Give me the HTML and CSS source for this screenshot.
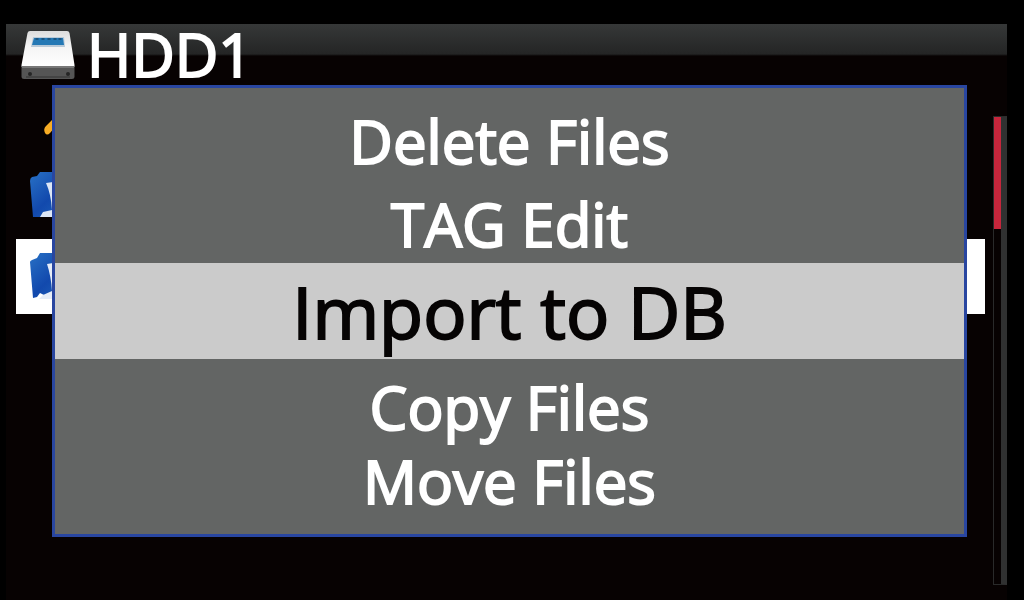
FILE: index.html
```html
<!DOCTYPE html>
<html lang="en">
<head>
    <meta charset="UTF-8">
    <meta name="viewport" content="width=device-width, initial-scale=1.0">
    <title>HDD1</title>
    <link rel="stylesheet" href="styles.css">
</head>
<body>

<div class="screen">
    <header class="title-bar">
        <svg class="drive-icon" viewBox="0 0 54 50" aria-hidden="true">
            <defs>
                <linearGradient id="driveTop" x1="0" y1="0" x2="0" y2="1">
                    <stop offset="0" stop-color="#dcdcdc"/>
                    <stop offset="0.4" stop-color="#f4f4f4"/>
                    <stop offset="1" stop-color="#ffffff"/>
                </linearGradient>
            </defs>
            <path d="M9 2H46Q48 2 48.500 4L53.500 36V38H0.500V36L6.500 4Q7 2 9 2Z" fill="url(#driveTop)"/>
            <path d="M12 8H43L44 18H10Z" fill="#b9cad8"/>
            <path d="M13 9H42L43 16H11Z" fill="#2579b5"/>
            <path d="M16 9V11M22 9V11M28 9V11M34 9V11M39 9V11" stroke="#1b5580" stroke-width="3"/>
            <path d="M0.500 37H53.500V48Q53.500 50 51 50H3Q0.500 50 0.500 48Z" fill="#555555"/>
            <path d="M1 38H53" stroke="#777777" stroke-width="2"/>
            <path d="M5 48H49" stroke="#444444" stroke-width="2"/>
            <circle cx="9" cy="45" r="2" fill="#252525"/>
            <circle cx="47" cy="45" r="2" fill="#252525"/>
        </svg>
        <h1>HDD1</h1>
    </header>

    <main class="browser">
        <!-- File list behind the menu -->
        <ul class="file-list">
            <li class="file-row">
                <svg class="file-icon" viewBox="0 0 48 48" aria-hidden="true">
                    <path d="M15 42Q13 38 16 35L22 29Q27 23 30 29L40 39L35 44L26 35L20 42Q17 45 15 42Z" fill="#f7ac24"/>
                </svg>
            </li>
            <li class="file-row">
                <svg class="file-icon" viewBox="0 0 48 48" aria-hidden="true">
                    <defs>
                        <linearGradient id="folder" x1="0" y1="0" x2="1" y2="1">
                            <stop offset="0" stop-color="#2871c5"/>
                            <stop offset="0.5" stop-color="#1249ad"/>
                            <stop offset="1" stop-color="#2268bd"/>
                        </linearGradient>
                    </defs>
                    <path d="M2 5L7 4L10 0H44Q47 0 47 4V45H3L0 9Q0 6 2 5Z" fill="url(#folder)"/>
                    <path d="M16 11L23 10L30 36V45H10L13 40L22 38Q21 22 16 11Z" fill="#dce6f5"/>
                </svg>
            </li>
            <li class="file-row selected">
                <svg class="file-icon" viewBox="0 0 48 48" aria-hidden="true">
                    <path d="M2 7L7 5L10 0H44Q47 0 47 3V42H14L10 40L7 44L3 45L0 9Q0 8 2 7Z" fill="url(#folder)"/>
                    <path d="M17 11L23 10L30 34V46H9L13 42L22 38Q21 23 17 11Z" fill="#e6edf8"/>
                </svg>
            </li>
        </ul>
        <div class="scroll-track">
            <div class="scroll-thumb"></div>
        </div>
    </main>

    <!-- Popup menu -->
    <div class="menu" role="menu">
        <button type="button" role="menuitem">Delete Files</button>
        <button type="button" role="menuitem">TAG Edit</button>
        <button type="button" role="menuitem" class="active">Import to DB</button>
        <button type="button" role="menuitem">Copy Files</button>
        <button type="button" role="menuitem">Move Files</button>
    </div>
</div>

</body>
</html>
```

FILE: styles.css
```css
* {
    box-sizing: border-box;
}
body {
    margin: 0;
    padding: 24px 17px 0 6px;
    min-height: 100vh;
    display: flex;
    background-color: #000;
    color: white;
    font-family: "Open Sans", "Noto Sans", sans-serif;
    /* a little heavier than regular */
    -webkit-text-stroke: 2px;
}
.screen {
    position: relative;
    flex: 1;
    display: flex;
    flex-direction: column;
    background-color: #070202;
}

.title-bar {
    display: flex;
    align-items: center;
    gap: 12px;
    height: 53px;
    padding: 6px 15px 0;
    background: linear-gradient(#363838 0, #242525 30px, #070202 32px);
}
.title-bar h1 {
    margin: 0;
    font-size: 60px;
    font-weight: 400;
    line-height: 60px;
}
.drive-icon {
    width: 54px;
    height: 50px;
    flex-shrink: 0;
}

.browser {
    flex: 1;
    display: flex;
    gap: 8px;
    padding: 0 0 15px 10px;
}
.file-list {
    flex: 1;
    display: flex;
    flex-direction: column;
    gap: 6px;
    margin: 0;
    padding: 0;
    list-style: none;
}
.file-row {
    display: flex;
    align-items: center;
    height: 75px;
    padding-left: 14px;
}
.file-row.selected {
    background-color: white;
}
.file-icon {
    width: 48px;
    height: 48px;
}
.scroll-track {
    width: 14px;
    margin-top: 39px;
    border: 1px solid #292a2a;
    border-right: 6px solid #303131;
    background-color: #070202;
}
.scroll-thumb {
    height: 24%;
    background-color: #c6263c;
}

/* Menu lies over the file list */
.menu {
    position: absolute;
    top: 61px;
    left: 46px;
    right: 40px;
    display: flex;
    flex-direction: column;
    padding: 16px 0;
    border: 3px solid #2946a0;
    background-color: #636564;
}
.menu button {
    height: 74px;
    margin: 0;
    padding: 0;
    border: none;
    background: none;
    color: white;
    font: inherit;
    font-size: 60px;
    line-height: 74px;
    text-align: center;
    cursor: pointer;
    -webkit-text-stroke: inherit;
}
.menu button:first-child {
    margin-bottom: 9px;
}
.menu button.active {
    height: 96px;
    margin: 2px 0 11px;
    background-color: #cbcbcb;
    color: #060404;
    font-size: 72px;
    line-height: 96px;
    -webkit-text-stroke: 2px #060404;
}
```
